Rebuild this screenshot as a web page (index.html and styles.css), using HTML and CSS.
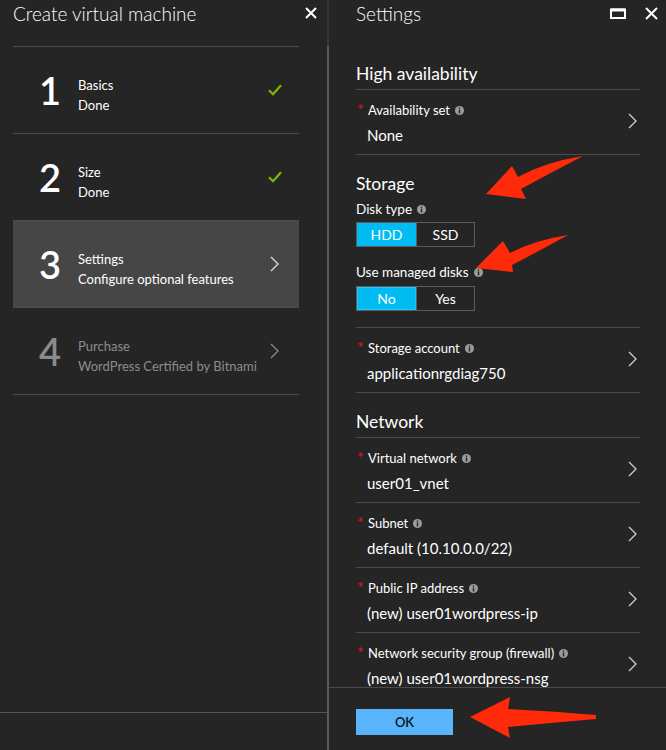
FILE: index.html
```html
<!DOCTYPE html>
<html lang="en">
<head>
<meta charset="utf-8">
<title>Create virtual machine</title>
<link rel="stylesheet" href="styles.css">
</head>
<body>
<div class="app">
  <section class="blade blade-left">
    <header class="blade-head">
      <h1 class="blade-title">Create virtual machine</h1>
      <svg class="ico-close" viewBox="0 0 12 12" width="12" height="12"><path d="M1 1L11 11M11 1L1 11" stroke="#fff" stroke-width="2" fill="none"/></svg>
    </header>
    <div class="blade-body">
      <ul class="steps">
        <li class="step">
          <span class="step-num">1</span>
          <div class="step-text"><div>Basics</div><div>Done</div></div>
          <svg class="ico-check" viewBox="0 0 14 12" width="14" height="12"><path d="M1 6.2L5 10.2L13 1.2" stroke="#7fba00" stroke-width="2.2" fill="none"/></svg>
        </li>
        <li class="step">
          <span class="step-num">2</span>
          <div class="step-text"><div>Size</div><div>Done</div></div>
          <svg class="ico-check" viewBox="0 0 14 12" width="14" height="12"><path d="M1 6.2L5 10.2L13 1.2" stroke="#7fba00" stroke-width="2.2" fill="none"/></svg>
        </li>
        <li class="step step-active">
          <span class="step-num">3</span>
          <div class="step-text"><div>Settings</div><div>Configure optional features</div></div>
          <svg class="ico-chev" viewBox="0 0 9 16" width="9" height="16"><path d="M1 1L8 8L1 15" stroke="#dcdcdc" stroke-width="1.3" fill="none"/></svg>
        </li>
        <li class="step step-disabled">
          <span class="step-num">4</span>
          <div class="step-text"><div>Purchase</div><div>WordPress Certified by Bitnami</div></div>
          <svg class="ico-chev" viewBox="0 0 9 16" width="9" height="16"><path d="M1 1L8 8L1 15" stroke="#8a8a8a" stroke-width="1.3" fill="none"/></svg>
        </li>
      </ul>
    </div>
    <footer class="left-foot"></footer>
  </section>

  <div class="divider"></div>

  <section class="blade blade-right">
    <header class="blade-head">
      <h1 class="blade-title">Settings</h1>
      <div class="head-icons">
        <svg class="ico-max" viewBox="0 0 16 11" width="16" height="11"><rect x="1" y="1.5" width="14" height="8.5" stroke="#fff" stroke-width="2" fill="none"/><rect x="1" y="0.5" width="14" height="3" fill="#fff"/></svg>
        <svg class="ico-close2" viewBox="0 0 13 13" width="13" height="13"><path d="M1 1L12 12M12 1L1 12" stroke="#fff" stroke-width="2" fill="none"/></svg>
      </div>
    </header>

    <div class="blade-body settings">
      <div class="group">
        <h2 class="group-title">High availability</h2>
        <div class="row">
          <div class="row-main">
            <div class="row-label"><span class="req">*</span>Availability set<svg class="ico-info" viewBox="0 0 9 9" width="9" height="9"><circle cx="4.5" cy="4.5" r="4.5" fill="#9c9c9c"/><rect x="3.8" y="1.5" width="1.4" height="1.3" fill="#252525"/><rect x="3.8" y="3.5" width="1.4" height="4" fill="#252525"/></svg></div>
            <div class="row-value">None</div>
          </div>
          <svg class="ico-chev row-chev" viewBox="0 0 9 16" width="9" height="16"><path d="M1 1L8 8L1 15" stroke="#d0d0d0" stroke-width="1.3" fill="none"/></svg>
        </div>
      </div>

      <div class="group">
        <h2 class="group-title">Storage</h2>
        <div class="field-label">Disk type<svg class="ico-info" viewBox="0 0 9 9" width="9" height="9"><circle cx="4.5" cy="4.5" r="4.5" fill="#9c9c9c"/><rect x="3.8" y="1.5" width="1.4" height="1.3" fill="#252525"/><rect x="3.8" y="3.5" width="1.4" height="4" fill="#252525"/></svg></div>
        <div class="toggle">
          <span class="seg seg-on">HDD</span><span class="seg">SSD</span>
        </div>
        <div class="field-label field-label-gap">Use managed disks<svg class="ico-info" viewBox="0 0 9 9" width="9" height="9"><circle cx="4.5" cy="4.5" r="4.5" fill="#9c9c9c"/><rect x="3.8" y="1.5" width="1.4" height="1.3" fill="#252525"/><rect x="3.8" y="3.5" width="1.4" height="4" fill="#252525"/></svg></div>
        <div class="toggle toggle-tight">
          <span class="seg seg-on seg-focus">No</span><span class="seg">Yes</span>
        </div>
        <div class="row row-after-toggle">
          <div class="row-main">
            <div class="row-label"><span class="req">*</span>Storage account<svg class="ico-info" viewBox="0 0 9 9" width="9" height="9"><circle cx="4.5" cy="4.5" r="4.5" fill="#9c9c9c"/><rect x="3.8" y="1.5" width="1.4" height="1.3" fill="#252525"/><rect x="3.8" y="3.5" width="1.4" height="4" fill="#252525"/></svg></div>
            <div class="row-value">applicationrgdiag750</div>
          </div>
          <svg class="ico-chev row-chev" viewBox="0 0 9 16" width="9" height="16"><path d="M1 1L8 8L1 15" stroke="#d0d0d0" stroke-width="1.3" fill="none"/></svg>
        </div>
      </div>

      <div class="group">
        <h2 class="group-title">Network</h2>
        <div class="row">
          <div class="row-main">
            <div class="row-label"><span class="req">*</span>Virtual network<svg class="ico-info" viewBox="0 0 9 9" width="9" height="9"><circle cx="4.5" cy="4.5" r="4.5" fill="#9c9c9c"/><rect x="3.8" y="1.5" width="1.4" height="1.3" fill="#252525"/><rect x="3.8" y="3.5" width="1.4" height="4" fill="#252525"/></svg></div>
            <div class="row-value">user01_vnet</div>
          </div>
          <svg class="ico-chev row-chev" viewBox="0 0 9 16" width="9" height="16"><path d="M1 1L8 8L1 15" stroke="#d0d0d0" stroke-width="1.3" fill="none"/></svg>
        </div>
        <div class="row">
          <div class="row-main">
            <div class="row-label"><span class="req">*</span>Subnet<svg class="ico-info" viewBox="0 0 9 9" width="9" height="9"><circle cx="4.5" cy="4.5" r="4.5" fill="#9c9c9c"/><rect x="3.8" y="1.5" width="1.4" height="1.3" fill="#252525"/><rect x="3.8" y="3.5" width="1.4" height="4" fill="#252525"/></svg></div>
            <div class="row-value">default (10.10.0.0/22)</div>
          </div>
          <svg class="ico-chev row-chev" viewBox="0 0 9 16" width="9" height="16"><path d="M1 1L8 8L1 15" stroke="#d0d0d0" stroke-width="1.3" fill="none"/></svg>
        </div>
        <div class="row">
          <div class="row-main">
            <div class="row-label"><span class="req">*</span>Public IP address<svg class="ico-info" viewBox="0 0 9 9" width="9" height="9"><circle cx="4.5" cy="4.5" r="4.5" fill="#9c9c9c"/><rect x="3.8" y="1.5" width="1.4" height="1.3" fill="#252525"/><rect x="3.8" y="3.5" width="1.4" height="4" fill="#252525"/></svg></div>
            <div class="row-value">(new) user01wordpress-ip</div>
          </div>
          <svg class="ico-chev row-chev" viewBox="0 0 9 16" width="9" height="16"><path d="M1 1L8 8L1 15" stroke="#d0d0d0" stroke-width="1.3" fill="none"/></svg>
        </div>
        <div class="row">
          <div class="row-main">
            <div class="row-label"><span class="req">*</span>Network security group (firewall)<svg class="ico-info" viewBox="0 0 9 9" width="9" height="9"><circle cx="4.5" cy="4.5" r="4.5" fill="#9c9c9c"/><rect x="3.8" y="1.5" width="1.4" height="1.3" fill="#252525"/><rect x="3.8" y="3.5" width="1.4" height="4" fill="#252525"/></svg></div>
            <div class="row-value">(new) user01wordpress-nsg</div>
          </div>
          <svg class="ico-chev row-chev" viewBox="0 0 9 16" width="9" height="16"><path d="M1 1L8 8L1 15" stroke="#d0d0d0" stroke-width="1.3" fill="none"/></svg>
        </div>
      </div>
    </div>

    <footer class="right-foot">
      <button class="btn-ok" type="button">OK</button>
    </footer>
  </section>
</div>

<svg class="annotations" viewBox="0 0 666 750" width="666" height="750">
  <path d="M486 194L512 166L518 177Q545 162 583 156Q552 172 521 189L526 199Z" fill="#ff2a0a"/>
  <path d="M476 268L503 241L510 253Q535 240 568 235Q541 250 512 265L513 272Z" fill="#ff2a0a"/>
  <path d="M470 717L510 697L508 709Q550 711 596 715L596 719Q550 723 508 727L510 738Z" fill="#ff2a0a"/>
</svg>
</body>
</html>
```

FILE: styles.css
```css
* { box-sizing: border-box; }

html, body {
  margin: 0;
  padding: 0;
  background: #252525;
  color: #ffffff;
  font-family: "Segoe UI", Lato, "Noto Sans", sans-serif;
}

body {
  position: relative;
  width: 666px;
  height: 750px;
  overflow: hidden;
}

.app {
  display: flex;
  width: 666px;
  height: 750px;
}

.blade {
  display: flex;
  flex-direction: column;
  height: 750px;
}

.blade-left { width: 327px; }
.blade-right { flex: 1; min-width: 0; }

.divider {
  width: 2px;
  background: linear-gradient(#363636 0 46px, #5a5a5a 46px);
}

.blade-head {
  height: 46px;
  display: flex;
  align-items: flex-start;
  justify-content: space-between;
  padding: 0 10px 0 13px;
}

.blade-right .blade-head { padding: 0 8px 0 27px; }

.blade-title {
  margin: 0;
  font-size: 19px;
  line-height: 28px;
  font-weight: 300;
  color: #fff;
}

.ico-close { margin-top: 7px; }

.head-icons {
  display: flex;
  align-items: flex-start;
  gap: 19px;
}
.ico-max { margin-top: 8px; }
.ico-close2 { margin-top: 7px; }

.blade-body {
  flex: 1;
  min-height: 0;
  overflow: hidden;
}

.blade-left .blade-body { padding: 0 28px 0 13px; }

/* steps */
.steps {
  list-style: none;
  margin: 0;
  padding: 0;
  border-top: 1px solid #4b4b4b;
}

.step {
  height: 87px;
  display: flex;
  align-items: center;
  border-bottom: 1px solid #4b4b4b;
  padding: 0 17px 0 24px;
}

.step-num {
  width: 26px;
  margin-right: 15px;
  text-align: center;
  font-size: 38px;
  line-height: 1;
  font-weight: 600;
}

.step-text {
  flex: 1;
  font-size: 13px;
  line-height: 20px;
  margin-top: 10px;
}

.step .ico-chev { margin-right: 3px; }

.step-active { background: #464646; }
.step-disabled { color: #8c8c8c; }

.left-foot {
  height: 38px;
  border-top: 1px solid #555;
}

/* settings */
.settings { padding: 16px 26px 0 27px; }

.group-title {
  margin: 0 0 3px;
  font-size: 17.5px;
  line-height: 24px;
  font-weight: 400;
}

.group + .group { margin-top: 17px; }

.row {
  display: flex;
  align-items: flex-start;
  border-top: 1px solid #4b4b4b;
  border-bottom: 1px solid #4b4b4b;
  height: 66px;
}
.row + .row { border-top: none; height: 65px; }

.row-main {
  flex: 1;
  padding-top: 10px;
}

.row-label {
  display: flex;
  align-items: center;
  font-size: 13px;
  line-height: 20px;
}

.req {
  width: 12px;
  color: #e81123;
  font-size: 16px;
  line-height: 16px;
  align-self: flex-start;
  padding-left: 1px;
  margin-top: 1px;
}

.ico-info { margin-left: 5px; }

.row-value {
  margin-top: 2px;
  padding-left: 11px;
  font-size: 15px;
  line-height: 26px;
}

.row-chev { margin: 23px 3px 0 0; }

.field-label {
  display: flex;
  align-items: center;
  font-size: 13.5px;
  line-height: 20px;
}
.field-label-gap { margin-top: 15px; }

.toggle {
  display: inline-flex;
  margin-top: 3px;
  border: 1px solid #5c5c5c;
  height: 25px;
}
.toggle-tight { margin-top: 4px; }

.seg {
  width: 59px;
  font-size: 14px;
  line-height: 23px;
  text-align: center;
  color: #fff;
}
.seg + .seg { width: 58px; border-left: 1px solid #5c5c5c; }
.seg-on { background: #00bcf2; }
.seg-focus { outline: 1px dotted #4fcdf3; outline-offset: -1px; }

.row-after-toggle { margin-top: 16px; }

.right-foot {
  height: 63px;
  border-top: 1px solid #4b4b4b;
  padding: 21px 0 0 27px;
}

.btn-ok {
  width: 97px;
  height: 26px;
  border: none;
  background: #58b4fb;
  color: #111;
  font-family: inherit;
  font-size: 13px;
  font-weight: 600;
  padding: 0;
}

.annotations {
  position: absolute;
  left: 0;
  top: 0;
  pointer-events: none;
}
```
